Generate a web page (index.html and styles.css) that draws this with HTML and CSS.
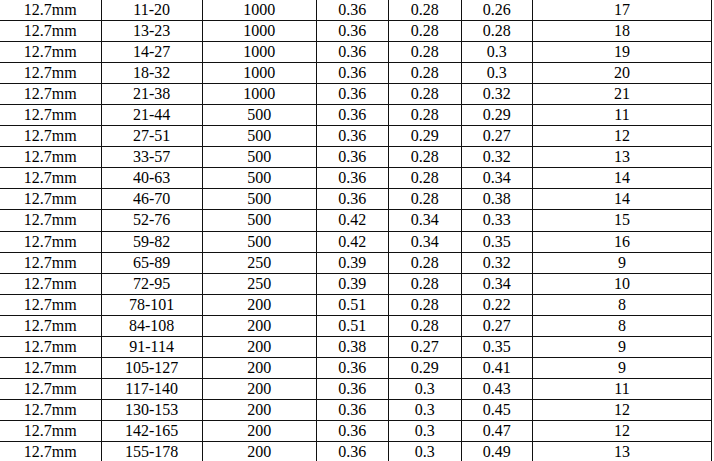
FILE: index.html
```html
<!DOCTYPE html>
<html>
<head>
<meta charset="utf-8">
<link rel="stylesheet" href="styles.css">
</head>
<body>
<table class="spec">
<colgroup>
<col class="c1"><col class="c2"><col class="c3"><col class="c4"><col class="c5"><col class="c6"><col class="c7">
</colgroup>
<tbody>
<tr><td>12.7mm</td><td>11-20</td><td>1000</td><td>0.36</td><td>0.28</td><td>0.26</td><td>17</td></tr>
<tr><td>12.7mm</td><td>13-23</td><td>1000</td><td>0.36</td><td>0.28</td><td>0.28</td><td>18</td></tr>
<tr><td>12.7mm</td><td>14-27</td><td>1000</td><td>0.36</td><td>0.28</td><td>0.3</td><td>19</td></tr>
<tr><td>12.7mm</td><td>18-32</td><td>1000</td><td>0.36</td><td>0.28</td><td>0.3</td><td>20</td></tr>
<tr><td>12.7mm</td><td>21-38</td><td>1000</td><td>0.36</td><td>0.28</td><td>0.32</td><td>21</td></tr>
<tr><td>12.7mm</td><td>21-44</td><td>500</td><td>0.36</td><td>0.28</td><td>0.29</td><td>11</td></tr>
<tr><td>12.7mm</td><td>27-51</td><td>500</td><td>0.36</td><td>0.29</td><td>0.27</td><td>12</td></tr>
<tr><td>12.7mm</td><td>33-57</td><td>500</td><td>0.36</td><td>0.28</td><td>0.32</td><td>13</td></tr>
<tr><td>12.7mm</td><td>40-63</td><td>500</td><td>0.36</td><td>0.28</td><td>0.34</td><td>14</td></tr>
<tr><td>12.7mm</td><td>46-70</td><td>500</td><td>0.36</td><td>0.28</td><td>0.38</td><td>14</td></tr>
<tr><td>12.7mm</td><td>52-76</td><td>500</td><td>0.42</td><td>0.34</td><td>0.33</td><td>15</td></tr>
<tr><td>12.7mm</td><td>59-82</td><td>500</td><td>0.42</td><td>0.34</td><td>0.35</td><td>16</td></tr>
<tr><td>12.7mm</td><td>65-89</td><td>250</td><td>0.39</td><td>0.28</td><td>0.32</td><td>9</td></tr>
<tr><td>12.7mm</td><td>72-95</td><td>250</td><td>0.39</td><td>0.28</td><td>0.34</td><td>10</td></tr>
<tr><td>12.7mm</td><td>78-101</td><td>200</td><td>0.51</td><td>0.28</td><td>0.22</td><td>8</td></tr>
<tr><td>12.7mm</td><td>84-108</td><td>200</td><td>0.51</td><td>0.28</td><td>0.27</td><td>8</td></tr>
<tr><td>12.7mm</td><td>91-114</td><td>200</td><td>0.38</td><td>0.27</td><td>0.35</td><td>9</td></tr>
<tr><td>12.7mm</td><td>105-127</td><td>200</td><td>0.36</td><td>0.29</td><td>0.41</td><td>9</td></tr>
<tr><td>12.7mm</td><td>117-140</td><td>200</td><td>0.36</td><td>0.3</td><td>0.43</td><td>11</td></tr>
<tr><td>12.7mm</td><td>130-153</td><td>200</td><td>0.36</td><td>0.3</td><td>0.45</td><td>12</td></tr>
<tr><td>12.7mm</td><td>142-165</td><td>200</td><td>0.36</td><td>0.3</td><td>0.47</td><td>12</td></tr>
<tr><td>12.7mm</td><td>155-178</td><td>200</td><td>0.36</td><td>0.3</td><td>0.49</td><td>13</td></tr>
</tbody>
</table>
</body>
</html>
```
FILE: styles.css
```css
html, body {
  margin: 0;
  padding: 0;
  background: #fff;
  overflow: hidden;
}
.spec {
  border-collapse: collapse;
  table-layout: fixed;
  width: 712px;
  font-family: "Liberation Serif", "Times New Roman", serif;
  font-size: 16px;
  color: #000;
}
.c1 { width: 101px; }
.c2 { width: 101px; }
.c3 { width: 114px; }
.c4 { width: 72px; }
.c5 { width: 73px; }
.c6 { width: 71px; }
.c7 { width: 179px; }
.spec td {
  border: 1px solid #111;
  height: 20.05px;
  padding: 0;
  text-align: center;
  vertical-align: middle;
  line-height: 20px;
  white-space: nowrap;
}
.spec tr:first-child td { border-top: none; }
.spec td:first-child { border-left: none; }
```
